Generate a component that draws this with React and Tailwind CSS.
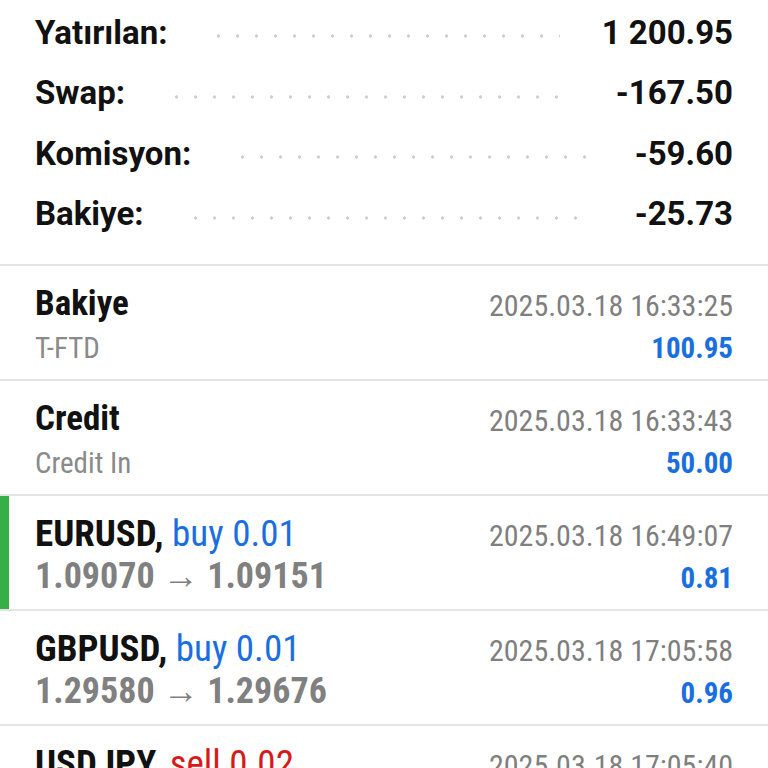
const summary = [
  { label: 'Yatırılan:', value: '1 200.95' },
  { label: 'Swap:', value: '-167.50' },
  { label: 'Komisyon:', value: '-59.60' },
  { label: 'Bakiye:', value: '-25.73' },
];

const deals = [
  { title: 'Bakiye', sub: 'T-FTD', time: '2025.03.18 16:33:25', amount: '100.95' },
  { title: 'Credit', sub: 'Credit In', time: '2025.03.18 16:33:43', amount: '50.00' },
  { symbol: 'EURUSD', side: 'buy', lot: '0.01', from: '1.09070', to: '1.09151', time: '2025.03.18 16:49:07', amount: '0.81', marked: true },
  { symbol: 'GBPUSD', side: 'buy', lot: '0.01', from: '1.29580', to: '1.29676', time: '2025.03.18 17:05:58', amount: '0.96' },
  { symbol: 'USDJPY', side: 'sell', lot: '0.02', from: '149.210', to: '149.180', time: '2025.03.18 17:05:40', amount: '0.40' },
];

function DealRow({ d }) {
  return (
    <div className="relative flex h-[115px] border-b-2 border-[#e4e4e4] bg-white">
      {d.marked && <div className="absolute left-0 top-0 bottom-0 w-[9px] bg-[#34b046]" />}
      <div className="flex flex-1 justify-between px-[35px] pt-[17px] font-['Roboto',sans-serif] font-stretch-condensed">
        <div className="flex flex-col">
          {d.symbol ? (
            <>
              <div className="text-[37px] leading-[42px] text-[#111]">
                <span className="font-bold">{d.symbol},</span>{' '}
                <span className={d.side === 'buy' ? 'text-[#1a6fe0]' : 'text-[#d61a1a]'}>
                  {d.side} {d.lot}
                </span>
              </div>
              <div className="text-[36px] leading-[42px] font-bold text-[#808080]">
                {d.from} → {d.to}
              </div>
            </>
          ) : (
            <>
              <div className="text-[35px] leading-[42px] font-bold text-[#111]">{d.title}</div>
              <div className="pt-[2px] text-[29px] leading-[42px] text-[#8a8a8a]">{d.sub}</div>
            </>
          )}
        </div>
        <div className="flex flex-col items-end">
          <div className="pt-[2px] text-[30px] leading-[42px] text-[#7f7f7f]">{d.time}</div>
          <div className="text-[29px] leading-[42px] font-bold text-[#1a6fe0]">{d.amount}</div>
        </div>
      </div>
    </div>
  );
}

export default function App() {
  return (
    <div className="h-[768px] w-[768px] overflow-hidden bg-white">
      <div className="flex flex-col border-b-2 border-[#e4e4e4] px-[35px] pt-[2px] pb-[20px] font-['Roboto',sans-serif]">
        {summary.map((s) => (
          <div key={s.label} className="flex h-[60.5px] items-center">
            <span className="text-[33px] font-bold text-[#111]">{s.label}</span>
            <div className="mx-[42px] mt-[8px] h-[4px] flex-1 bg-[radial-gradient(circle,#cfcfcf_1.4px,transparent_1.9px)] bg-[length:19px_4px] bg-repeat-x" />
            <span className="text-[33px] font-bold text-[#111]">{s.value}</span>
          </div>
        ))}
      </div>
      {deals.map((d, i) => (
        <DealRow key={i} d={d} />
      ))}
    </div>
  );
}
